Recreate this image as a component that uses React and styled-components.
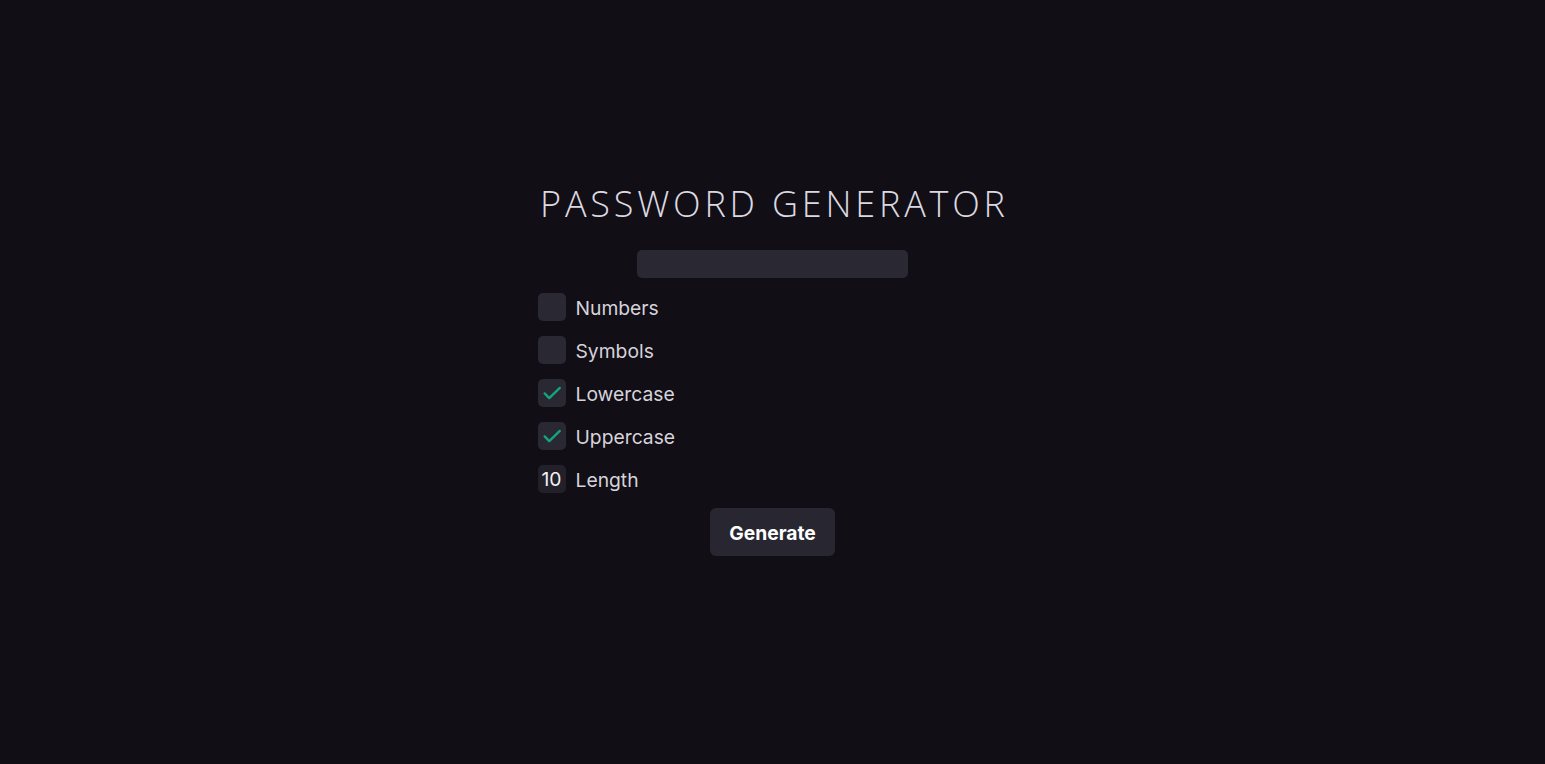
import React, { useState } from 'react';
import styled, { createGlobalStyle } from 'styled-components';

const GlobalStyle = createGlobalStyle`
  html, body {
    margin: 0;
    padding: 0;
    background: #110e16;
  }
  body {
    font-family: Inter, "Liberation Sans", sans-serif;
    color: #d9d6de;
  }
`;

const Page = styled.main`
  min-height: 100vh;
  display: flex;
  justify-content: center;
  padding-top: 180px;
  box-sizing: border-box;
`;

const Card = styled.div`
  display: flex;
  flex-direction: column;
  align-items: center;
  width: 470px;
`;

const Title = styled.h1`
  margin: 0 -3.8px 0 0;
  font-family: "Open Sans", "Liberation Sans", sans-serif;
  font-weight: 300;
  font-size: 36px;
  line-height: 48px;
  letter-spacing: 3.8px;
  color: #dcd9e0;
  white-space: nowrap;
`;

const Output = styled.input`
  margin-top: 22px;
  width: 271px;
  height: 28px;
  box-sizing: border-box;
  border: none;
  border-radius: 5px;
  background: #292833;
  color: #fff;
  font: inherit;
  outline: none;
`;

const Options = styled.ul`
  list-style: none;
  margin: 15px 0 0;
  padding: 0;
  align-self: stretch;
  display: flex;
  flex-direction: column;
  gap: 15px;
`;

const Option = styled.li`
  display: flex;
  align-items: center;
  gap: 10px;
  height: 28px;
`;

const Box = styled.span`
  width: 28px;
  height: 28px;
  border-radius: 5px;
  background: ${p => (p.$dark ? '#22212a' : '#292833')};
  display: flex;
  align-items: center;
  justify-content: center;
  color: #f2f0f5;
  font-size: 19.3px;
  flex-shrink: 0;
`;

const Label = styled.span`
  font-size: 19.3px;
  line-height: 30px;
  padding-top: 2px;
  color: #d6d3db;
`;

const Button = styled.button`
  margin-top: 15px;
  width: 125px;
  height: 48px;
  border: none;
  border-radius: 6px;
  background: #282731;
  color: #fff;
  font-family: Inter, "Liberation Sans", sans-serif;
  font-weight: 700;
  font-size: 19.3px;
  padding-top: 2px;
  cursor: pointer;
`;

const Check = () => (
  <svg width="22" height="22" viewBox="0 0 24 24" fill="none" stroke="#13a57b" strokeWidth="2.6" strokeLinecap="round" strokeLinejoin="round">
    <path d="M20.5 6.5 9 17.5l-5-5" />
  </svg>
);

const App = () => {
  const [opts, setOpts] = useState({
    Numbers: false,
    Symbols: false,
    Lowercase: true,
    Uppercase: true,
  });

  return (
    <>
      <GlobalStyle />
      <Page>
        <Card>
          <Title>PASSWORD GENERATOR</Title>
          <Output readOnly value="" />
          <Options>
            {Object.keys(opts).map(name => (
              <Option key={name} onClick={() => setOpts({ ...opts, [name]: !opts[name] })}>
                <Box>{opts[name] && <Check />}</Box>
                <Label>{name}</Label>
              </Option>
            ))}
            <Option>
              <Box $dark>10</Box>
              <Label>Length</Label>
            </Option>
          </Options>
          <Button>Generate</Button>
        </Card>
      </Page>
    </>
  );
};

export default App;
